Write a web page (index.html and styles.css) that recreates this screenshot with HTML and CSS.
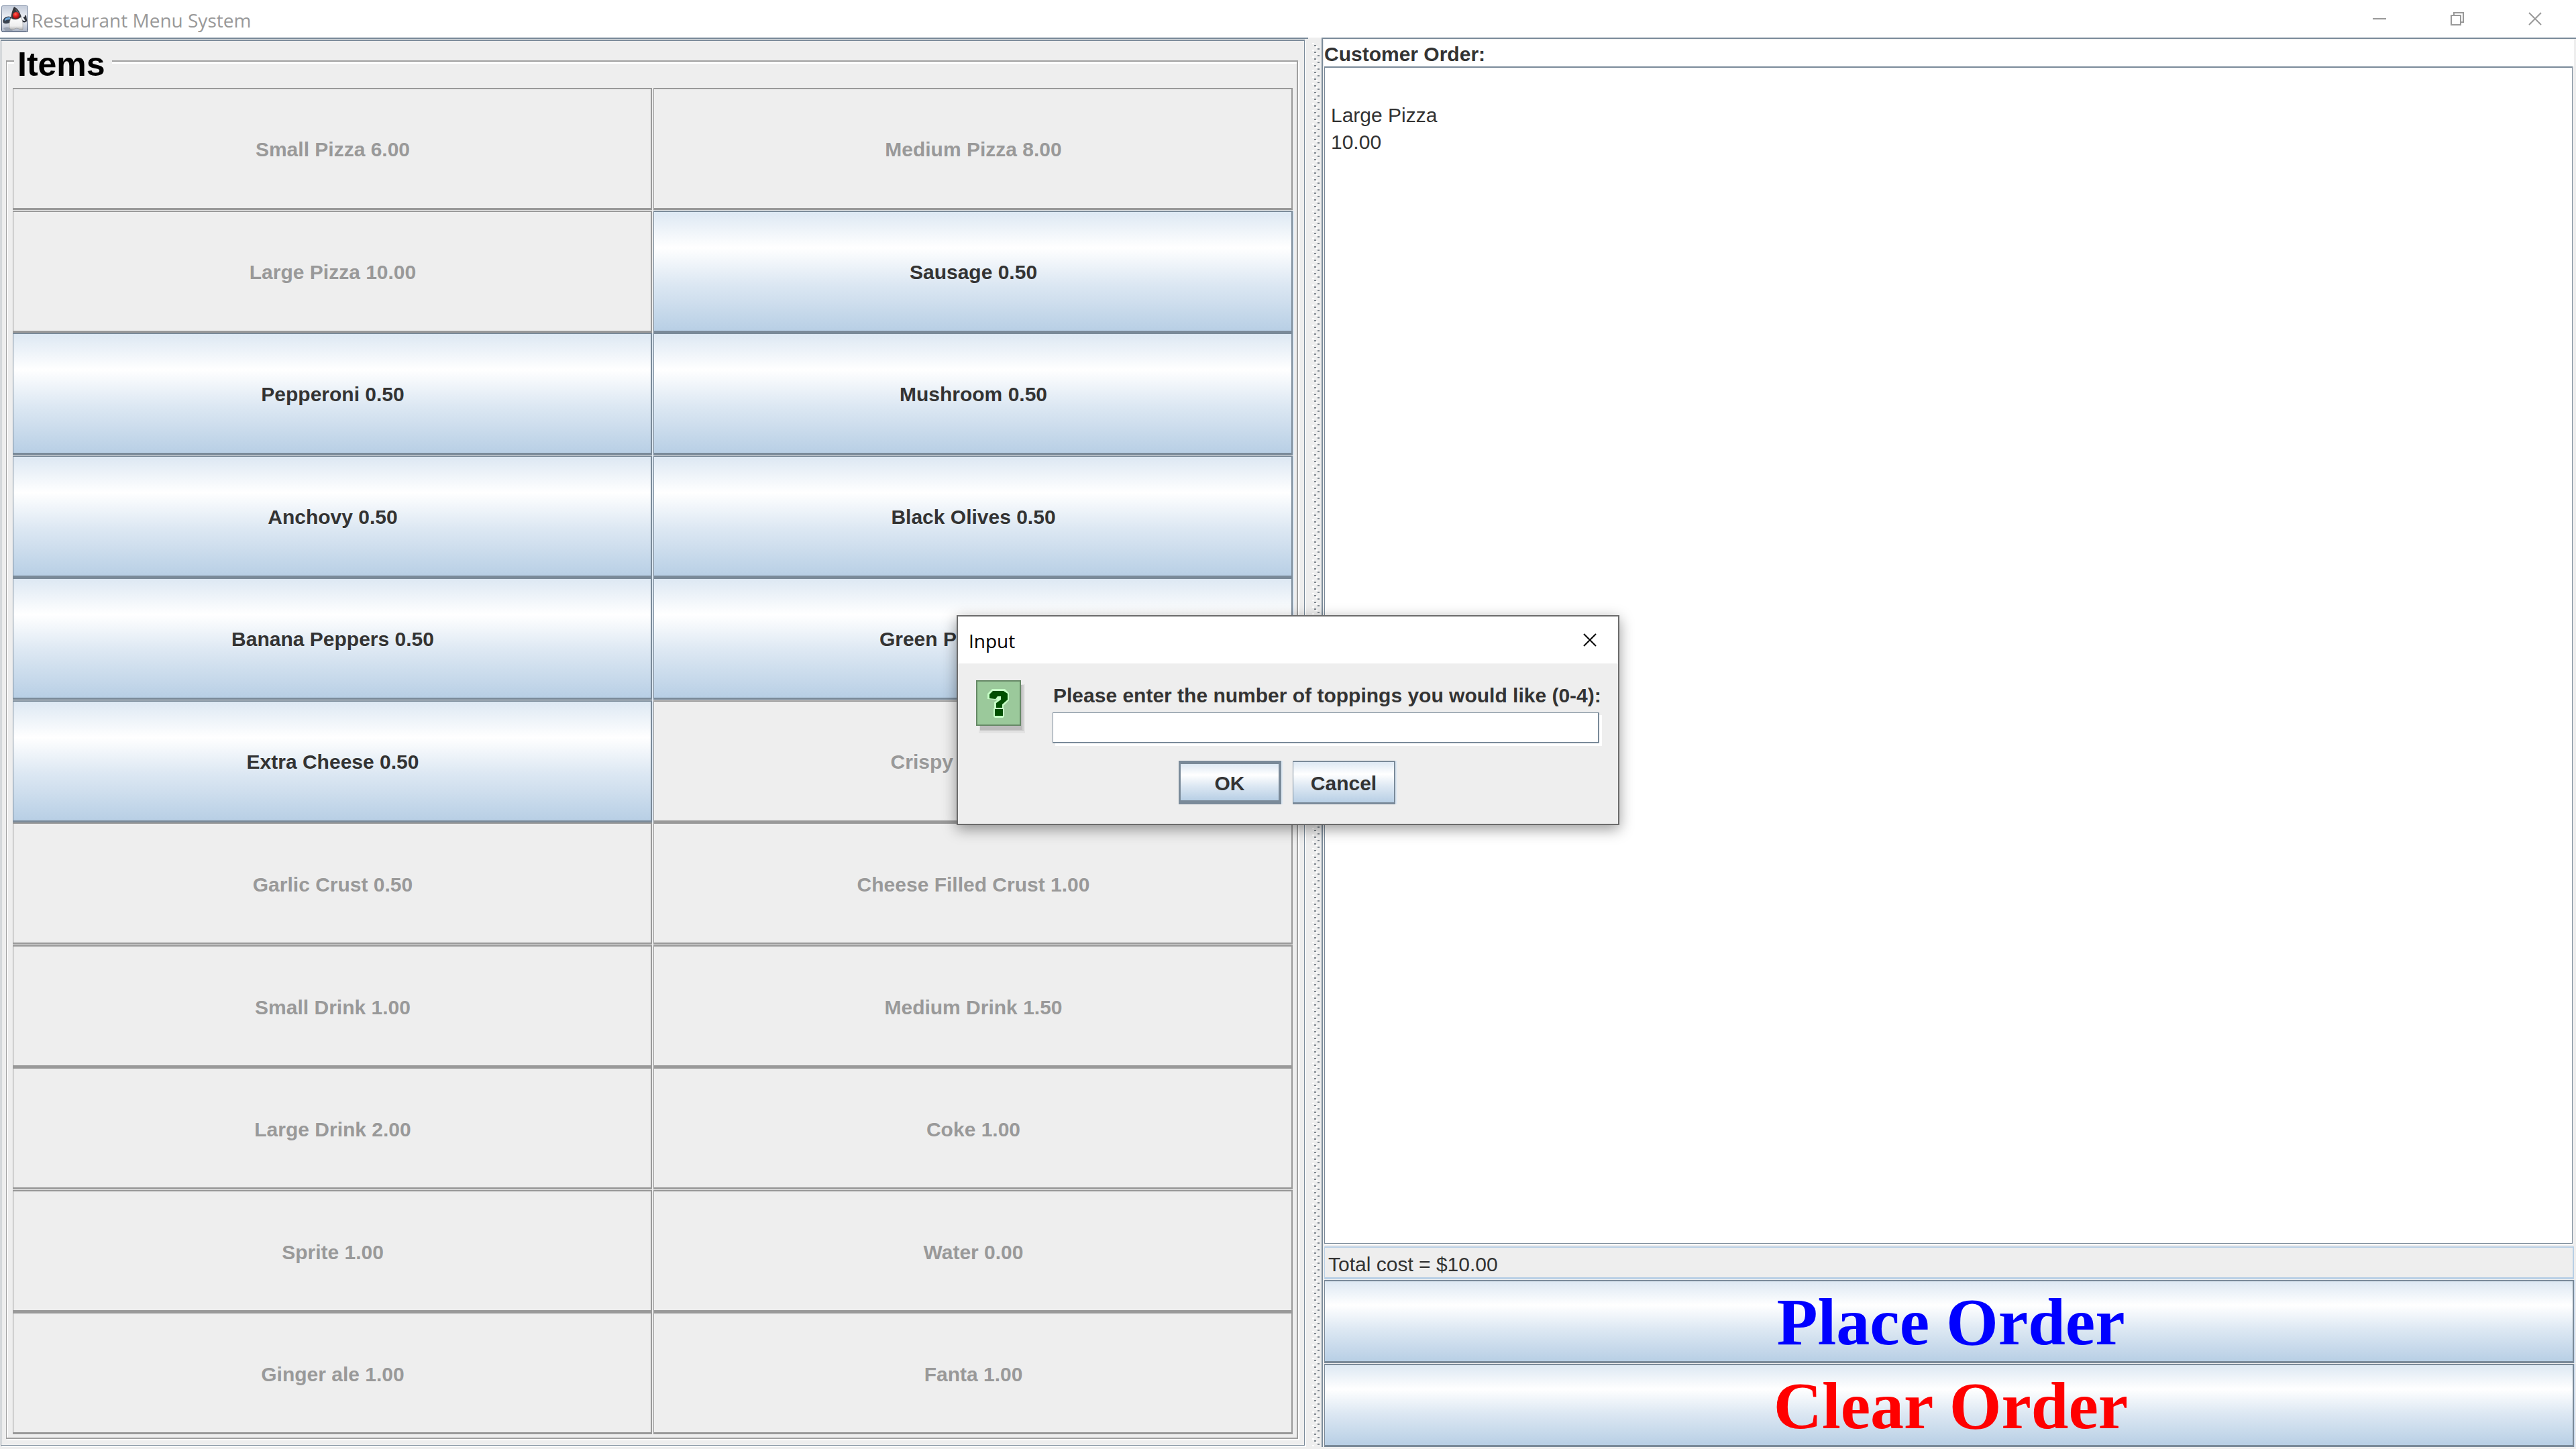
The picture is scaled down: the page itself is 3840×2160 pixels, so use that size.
FILE: index.html
```html
<!DOCTYPE html>
<html lang="en">
<head>
<meta charset="utf-8">
<title>Restaurant Menu System</title>
<link rel="stylesheet" href="styles.css">
</head>
<body>
<header class="titlebar">
  <svg class="app-icon" viewBox="0 0 40 40" aria-hidden="true">
    <defs>
      <linearGradient id="tile" x1="0" y1="0" x2="0" y2="1"><stop offset="0" stop-color="#c3cbd9"/><stop offset=".5" stop-color="#f3f5f9"/><stop offset="1" stop-color="#aab3c4"/></linearGradient>
      <linearGradient id="frame" x1="0" y1="0" x2="0" y2="1"><stop offset="0" stop-color="#8e9bb0"/><stop offset="1" stop-color="#2f3f5c"/></linearGradient>
      <linearGradient id="belly" x1="0" y1="0" x2="0" y2="1"><stop offset="0" stop-color="#ffffff"/><stop offset=".7" stop-color="#eeeeee"/><stop offset="1" stop-color="#a9a9a9"/></linearGradient>
      <radialGradient id="nose" cx=".4" cy=".3" r=".7"><stop offset="0" stop-color="#ff6a55"/><stop offset=".5" stop-color="#e02020"/><stop offset="1" stop-color="#8c0d0d"/></radialGradient>
    </defs>
    <rect x=".5" y=".5" width="39" height="39" rx="2" fill="url(#tile)" stroke="url(#frame)"/>
    <path d="M3 34Q8 31 14 34L17 38H6Z" fill="#98a1b0"/>
    <path d="M2 23Q5 15 14 17V25Q7 29 3 26Z" fill="#39424f"/>
    <path d="M5 21Q8 17 13 18V21Q8 21 5 23Z" fill="#6fa9dc"/>
    <path d="M30 22Q34 26 37 23M37 23L36 16M37 23L34 18" fill="none" stroke="#30343b" stroke-width="2.4" stroke-linecap="round"/>
    <path d="M14 22Q15 9 19 2Q28 6 31 22Z" fill="#34363b"/>
    <path d="M20 4Q26 8 28 16L24 12Z" fill="#5b5e65"/>
    <path d="M14 19Q22 24 30 17Q33 27 32 36Q29 38 26 35Q23 33 20 35Q16 38 12 34Q11 27 14 19Z" fill="url(#belly)" stroke="#8b8b8b" stroke-width=".5"/>
    <circle cx="22" cy="15" r="5" fill="url(#nose)"/>
  </svg>
  <h1 class="window-title">Restaurant Menu System</h1>
  <div class="window-controls">
    <button class="window-button" type="button" aria-label="Minimize"><svg width="20" height="20" viewBox="0 0 20 20"><path d="M0 10H20" stroke="#999" stroke-width="2"/></svg></button>
    <button class="window-button" type="button" aria-label="Restore"><svg width="20" height="20" viewBox="0 0 20 20" fill="none" stroke="#999" stroke-width="2"><path d="M1 5H15V19H1Z"/><path d="M5 5V1H19V15H15"/></svg></button>
    <button class="window-button" type="button" aria-label="Close"><svg width="20" height="20" viewBox="0 0 20 20"><path d="M1 1L19 19M19 1L1 19" stroke="#999" stroke-width="2"/></svg></button>
  </div>
</header>

<main class="split">
  <section class="items-pane">
    <fieldset class="items">
      <legend>Items</legend>
      <button class="item" type="button" disabled>Small Pizza 6.00</button>
      <button class="item" type="button" disabled>Medium Pizza 8.00</button>
      <button class="item" type="button" disabled>Large Pizza 10.00</button>
      <button class="item" type="button">Sausage 0.50</button>
      <button class="item" type="button">Pepperoni 0.50</button>
      <button class="item" type="button">Mushroom 0.50</button>
      <button class="item" type="button">Anchovy 0.50</button>
      <button class="item" type="button">Black Olives 0.50</button>
      <button class="item" type="button">Banana Peppers 0.50</button>
      <button class="item" type="button">Green Peppers 0.50</button>
      <button class="item" type="button">Extra Cheese 0.50</button>
      <button class="item" type="button" disabled>Crispy Crust 0.50</button>
      <button class="item" type="button" disabled>Garlic Crust 0.50</button>
      <button class="item" type="button" disabled>Cheese Filled Crust 1.00</button>
      <button class="item" type="button" disabled>Small Drink 1.00</button>
      <button class="item" type="button" disabled>Medium Drink 1.50</button>
      <button class="item" type="button" disabled>Large Drink 2.00</button>
      <button class="item" type="button" disabled>Coke 1.00</button>
      <button class="item" type="button" disabled>Sprite 1.00</button>
      <button class="item" type="button" disabled>Water 0.00</button>
      <button class="item" type="button" disabled>Ginger ale 1.00</button>
      <button class="item" type="button" disabled>Fanta 1.00</button>
    </fieldset>
  </section>

  <div class="divider" role="separator" aria-orientation="vertical">
    <svg width="20" height="100%" aria-hidden="true">
      <pattern id="bumps" width="20" height="10" patternUnits="userSpaceOnUse">
        <rect x="6" y="8" width="3" height="2" fill="#fff"/>
        <rect x="11" y="3" width="3" height="2" fill="#fff"/>
        <rect x="9" y="1" width="3" height="2" fill="#808890"/>
        <rect x="14" y="6" width="3" height="2" fill="#808890"/>
      </pattern>
      <rect y="8" width="20" height="100%" fill="url(#bumps)"/>
    </svg>
  </div>

  <section class="order-pane">
    <label class="order-label" for="order">Customer Order:</label>
    <textarea class="order-text" id="order" spellcheck="false">

Large Pizza
10.00</textarea>
    <input class="total" type="text" aria-label="Total cost" value="Total cost = $10.00" readonly>
    <button class="action place" type="button">Place Order</button>
    <button class="action clear" type="button">Clear Order</button>
  </section>
</main>

<div class="overlay">
  <dialog class="dialog" open aria-labelledby="dialog-title">
    <header class="dialog-bar">
      <h2 class="dialog-title" id="dialog-title">Input</h2>
      <button class="dialog-close" type="button" aria-label="Close"><svg width="20" height="20" viewBox="0 0 20 20"><path d="M1 1L19 19M19 1L1 19" stroke="#000" stroke-width="2"/></svg></button>
    </header>
    <form class="dialog-body">
      <svg class="question" viewBox="0 0 76 82" aria-hidden="true">
        <path d="M4 6H73V79H4Z" fill="#e3e3e3"/>
        <path d="M6 7H71V76H6Z" fill="#cfcfcf"/>
        <path d="M6 7H69V74H6Z" fill="#bcbcbc"/>
        <path d="M1 1H66V67H1Z" fill="#9bc99b" stroke="#668866" stroke-width="2"/>
        <path d="M17 28V20L24 13H43L49 19V30L41 38V43H27V33L32 29Z" fill="#c6ffc6"/>
        <path d="M26 42H42V54L40 56H28L26 54Z" fill="#c6ffc6"/>
        <path d="M20 27V21L25 16H41L47 20V29L39 36V41H30V34L37 29V24H32L29 28Z" fill="#004f00"/>
        <path d="M32 24H37V29H32Z" fill="#c6ffc6"/>
        <path d="M28 43H40V53H28Z" fill="#004f00"/>
      </svg>
      <div class="field">
        <label for="toppings">Please enter the number of toppings you would like (0-4):</label>
        <input class="field-input" id="toppings" type="text">
      </div>
      <div class="dialog-actions">
        <button class="dialog-button default" type="button">OK</button>
        <button class="dialog-button" type="button">Cancel</button>
      </div>
    </form>
  </dialog>
</div>
</body>
</html>
```
FILE: styles.css
```css
:root {
  --edge: #7a8a99;
  --soft-edge: #b8cfe5;
  --face: #eeeeee;
  --ink: #333333;
  --muted: #999999;
  --metal: linear-gradient(#dde8f3 0%, #ffffff 30%, #dde8f3 60%, #b8cfe5 100%);
}

* { box-sizing: border-box; }

body {
  margin: 0;
  height: 100vh;
  display: flex;
  flex-direction: column;
  overflow: hidden;
  background: var(--face);
  color: var(--ink);
  font: 30px/40px "Liberation Sans", Arial, sans-serif;
}

button, input, textarea {
  margin: 0;
  border-radius: 0;
  font: inherit;
  color: inherit;
  outline: none;
}

/* Window frame */
.titlebar {
  flex: none;
  display: flex;
  align-items: center;
  gap: 5px;
  height: 56px;
  padding: 0 3px 0 2px;
  background: #fff;
}
.app-icon { width: 40px; height: 40px; }
.window-title {
  margin: 0;
  padding-top: 4px;
  color: var(--muted);
  font: 400 28px/40px "Open Sans", "Noto Sans", sans-serif;
}
.window-controls { display: flex; margin-left: auto; }
.window-button {
  display: flex;
  align-items: center;
  justify-content: center;
  width: 116px;
  height: 54px;
  padding: 0;
  border: 0;
  background: none;
}

.split {
  flex: 1;
  min-height: 0;
  display: grid;
  grid-template-columns: minmax(0, 1950fr) 20px minmax(0, 1870fr);
}

/* Menu items */
.items-pane {
  position: relative;
  display: flex;
  margin: 3px 5px 5px 1px;
  padding: 1px 9px 9px 7px;
  border: solid var(--edge);
  border-width: 2px 1px 1px;
  box-shadow: 2px 2px #fff;
}
.items-pane::before {
  content: "";
  position: absolute;
  inset: -5px -6px auto -2px;
  height: 2px;
  background: var(--edge);
}
.items {
  flex: 1;
  min-width: 0;
  display: grid;
  grid-template-columns: 1fr 1fr;
  grid-template-rows: repeat(11, 1fr);
  margin: 0;
  padding: 11px 4px 4px 9px;
  border: solid #a0a0a0;
  border-width: 2px 2px 2px 1px;
  box-shadow: inset 2px 3px #fff, 2px 2px #fff;
}
.items legend {
  margin-left: 2px;
  padding: 10px 10px 0 5px;
  background: var(--face);
  color: #000;
  font-size: 50px;
  font-weight: 700;
  line-height: 48px;
}
.item {
  min-width: 0;
  margin-right: 2px;
  padding: 4px 0 0 2px;
  border: solid var(--edge);
  border-width: 2px 2px 3px 1px;
  background: var(--metal) padding-box;
  font-weight: 700;
}
.item:nth-of-type(4n + 1), .item:nth-of-type(4n + 2) { margin-bottom: 1px; }
.item:disabled {
  border-color: var(--muted);
  background: var(--face);
  color: var(--muted);
}
.item:not(:disabled) { box-shadow: 2px 0 #dde8f3; }

.divider { min-height: 0; overflow: hidden; margin-bottom: 4px; }
.divider svg { display: block; }

/* Order */
.order-pane {
  display: flex;
  flex-direction: column;
  margin-bottom: 3px;
  padding: 1px 3px 0 2px;
  border: solid var(--edge);
  border-width: 2px 0 0 2px;
}
.order-label {
  padding-top: 4px;
  background: #fff;
  font-weight: 700;
  line-height: 36px;
}
.order-text {
  flex: 1;
  min-height: 0;
  margin: 0 2px 4px 0;
  padding: 11px 9px;
  border: solid var(--edge);
  border-width: 2px 1px 1px;
  box-shadow: 1px 2px #fff;
  background: #fff;
  resize: none;
}
.total {
  height: 49px;
  margin-bottom: 1px;
  padding: 6px 5px 0;
  border: solid var(--soft-edge);
  border-width: 2px 2px 3px 1px;
  background: var(--face);
}
.action {
  height: 124px;
  padding: 3px 0 0 6px;
  border: solid var(--edge);
  border-width: 2px 2px 3px 1px;
  background: var(--metal) padding-box;
  box-shadow: 2px 0 #ccdaea;
  font: 700 100px/116px "Liberation Serif", "Times New Roman", serif;
}
.place { margin-bottom: 1px; color: #0000ff; }
.clear { color: #ff0000; }

/* Toppings prompt */
.overlay {
  position: absolute;
  inset: 0;
  display: flex;
  align-items: center;
  justify-content: center;
  padding-bottom: 13px;
}
.dialog {
  position: static;
  width: 988px;
  margin: 0;
  padding: 0;
  border: 2px solid #6b6b6b;
  background: var(--face);
  color: var(--ink);
  box-shadow: 0 6px 20px rgba(0, 0, 0, .4);
}
.dialog-bar {
  display: flex;
  align-items: center;
  justify-content: space-between;
  height: 70px;
  padding: 0 32px 0 16px;
  background: #fff;
}
.dialog-title {
  margin: 0;
  padding-top: 2px;
  color: #000;
  font: 400 28px/40px "Open Sans", "Noto Sans", sans-serif;
}
.dialog-close {
  display: flex;
  padding: 0;
  border: 0;
  background: none;
}
.dialog-body {
  display: grid;
  grid-template-columns: 76px 1fr;
  column-gap: 38px;
  row-gap: 22px;
  padding: 25px 24px 29px 27px;
}
.question { width: 76px; height: 82px; }
.field { display: flex; flex-direction: column; }
.field label {
  padding: 3px 0 5px 1px;
  font-weight: 700;
  white-space: nowrap;
}
.field-input {
  height: 46px;
  margin: 0 4px 4px 0;
  padding: 0 5px;
  border: solid var(--edge);
  border-width: 1px 2px 2px 1px;
  background: #fff;
  box-shadow: 4px 4px #fff;
}
.dialog-actions {
  grid-column: 1 / -1;
  display: flex;
  justify-content: center;
  gap: 17px;
  padding-right: 6px;
}
.dialog-button {
  width: 153px;
  height: 65px;
  padding: 4px 0 0;
  border: solid var(--edge);
  border-width: 2px 2px 3px 1px;
  background: var(--metal) padding-box;
  box-shadow: 2px 0 #dde8f3;
  font-weight: 700;
}
.dialog-button.default { border-width: 5px 4px 6px 3px; }
```
